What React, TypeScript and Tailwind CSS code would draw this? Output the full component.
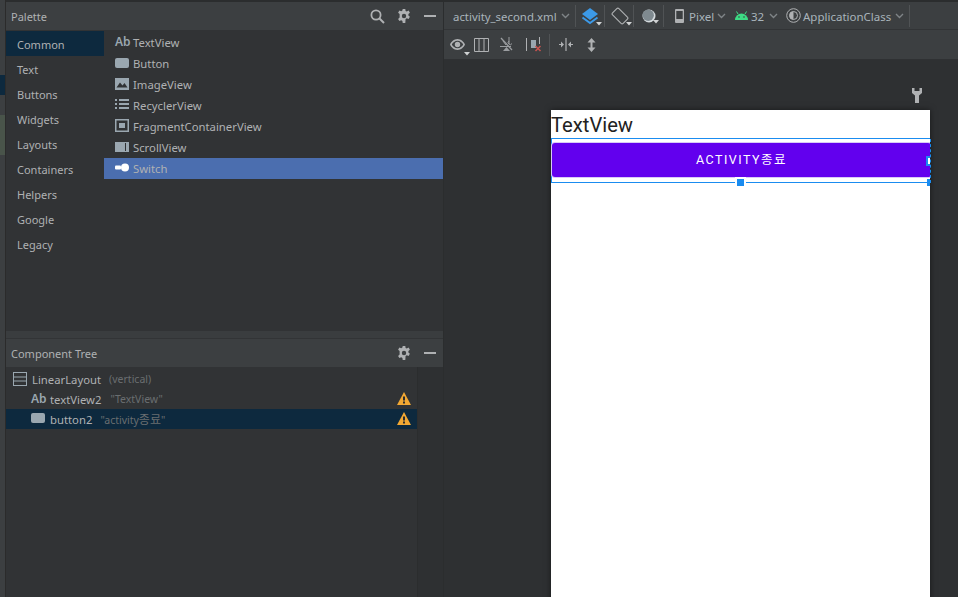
const f = { fontFamily: '"Noto Sans","Noto Sans CJK KR",sans-serif' };

function Caret() {
  return <svg width="9" height="6" viewBox="0 0 9 6" className="ml-[4px]"><path d="M1 1l3.5 3.5L8 1" fill="none" stroke="#7f8487" strokeWidth="1.4" /></svg>;
}
function Corner() {
  return <svg width="6" height="4" viewBox="0 0 6 4" className="absolute right-[-3px] bottom-[-1px]"><path d="M0 0h6L3 3.5z" fill="#d0d2d3" /></svg>;
}
function Gear() {
  return (
    <svg width="14" height="14" viewBox="0 0 14 14">
      <path fillRule="evenodd" fill="#afb1b3" d="M5.7 0h2.6l.3 2 1.2.6L11.600 1.500l1.300 2.200-1.500 1.300v1.400l1.500 1.300-1.300 2.200-1.800-.7-1.200.7L8.300 14H5.700l-.3-2-1.200-.7-1.800.7L1.100 9.900l1.500-1.300V5L1.100 3.700l1.300-2.200 1.800.7 1.200-.6zM7 4.800a2.200 2.200 0 100 4.400 2.200 2.200 0 000-4.400z" />
    </svg>
  );
}
function Minus() {
  return <div className="w-[12px] h-[2px] bg-[#afb1b3]" />;
}
function Warn() {
  return (
    <svg width="14" height="13" viewBox="0 0 14 13">
      <path d="M7 0l7 13H0z" fill="#f2a833" />
      <rect x="6" y="4.500" width="2" height="4" fill="#2b2d2e" />
      <rect x="6" y="9.500" width="2" height="2" fill="#2b2d2e" />
    </svg>
  );
}
function BtnIcon() {
  return <div className="w-[14px] h-[10px] rounded-[2px] bg-[#9aa7b0]" />;
}
function AbIcon() {
  return <span className="text-[12px] leading-none font-semibold text-[#9aa7b0]" style={f}>Ab</span>;
}

const categories = ['Common', 'Text', 'Buttons', 'Widgets', 'Layouts', 'Containers', 'Helpers', 'Google', 'Legacy'];

const widgets: [string, React.ReactNode][] = [
  ['TextView', <AbIcon />],
  ['Button', <BtnIcon />],
  ['ImageView', (
    <svg width="14" height="12" viewBox="0 0 14 12"><path fillRule="evenodd" fill="#9aa7b0" d="M0 0h14v12H0zM1.500 9.500h11L9.500 5 7.500 7.500 5 4.500z" /></svg>
  )],
  ['RecyclerView', (
    <svg width="14" height="11" viewBox="0 0 14 11" fill="#9aa7b0"><rect x="0" y="0" width="2" height="2" /><rect x="4" y="0" width="10" height="2" /><rect x="0" y="4" width="2" height="2" /><rect x="4" y="4" width="10" height="2" /><rect x="0" y="8" width="2" height="2" /><rect x="4" y="8" width="10" height="2" /></svg>
  )],
  ['FragmentContainerView', (
    <svg width="14" height="13" viewBox="0 0 14 13"><path fillRule="evenodd" fill="#9aa7b0" d="M0 0h14v13H0zM1.500 1.500v10h11v-10z" /><rect x="4" y="4" width="6" height="5" fill="#9aa7b0" /></svg>
  )],
  ['ScrollView', (
    <svg width="14" height="10" viewBox="0 0 14 10"><rect width="14" height="10" fill="#9aa7b0" /><rect x="10" y="1" width="1" height="8" fill="#313335" /></svg>
  )],
  ['Switch', (
    <svg width="14" height="9" viewBox="0 0 14 9"><rect x="0" y="2.500" width="6" height="4" rx="1" fill="#fff" /><circle cx="10" cy="4.500" r="4" fill="#fff" /></svg>
  )],
];

function Sep() {
  return <div className="w-px h-[22px] bg-[#505355]" />;
}

export default function App() {
  return (
    <div className="w-[958px] h-[597px] overflow-hidden flex bg-[#2e3032] text-[#afb1b3]" style={f}>
      {/* left IDE strip */}
      <div className="w-[6px] h-full flex flex-col bg-[#3c3f41] border-r border-[#2b2b2b]">
        <div className="h-[75px]" />
        <div className="h-[20px] bg-[#0d293e]" />
        <div className="h-[20px]" />
        <div className="h-[40px] bg-[#49544a]" />
      </div>

      {/* left panels */}
      <div className="w-[437px] h-full flex flex-col">
        <div className="h-[2px] bg-[#2b2d2e]" />
        <div className="h-[28px] flex items-center bg-[#3c3f41] pl-[5px] pr-[7px]">
          <span className="text-[11px] text-[#afb1b3] flex-1 pt-[2px]">Palette</span>
          <svg width="15" height="15" viewBox="0 0 15 15" className="mr-[12px]"><circle cx="6" cy="6" r="4.600" fill="none" stroke="#afb1b3" strokeWidth="1.800" /><path d="M9.500 9.500l4.500 4.500" stroke="#afb1b3" strokeWidth="2" /></svg>
          <div className="mr-[13px] flex"><Gear /></div>
          <Minus />
        </div>
        <div className="h-[301px] flex bg-[#313335]">
          <div className="w-[98px] flex flex-col pt-px">
            {categories.map((c, i) => (
              <div key={c} className={`h-[25px] pl-[11px] pt-[4px] flex items-center text-[11px] ${i === 0 ? 'bg-[#0d293e]' : ''}`}>{c}</div>
            ))}
          </div>
          <div className="flex-1 flex flex-col pt-[2px]">
            {widgets.map(([name, icon]) => (
              <div key={name} className={`h-[21px] flex items-center text-[11.300px] ${name === 'Switch' ? 'bg-[#4b6eaf]' : ''}`}>
                <div className="w-[29px] pl-[11px] flex items-center shrink-0 -translate-y-px">{icon}</div>
                <span className="pt-[2px]">{name}</span>
              </div>
            ))}
          </div>
        </div>
        <div className="h-[8px] bg-[#3a3d3f] border-b border-[#323436]" />
        <div className="h-[28px] flex items-center bg-[#3c3f41] pl-[5px] pr-[7px]">
          <span className="text-[11px] flex-1 pt-[2px]">Component Tree</span>
          <div className="mr-[13px] flex"><Gear /></div>
          <Minus />
        </div>
        <div className="flex-1 flex bg-[#313335]">
          <div className="w-[412px] flex flex-col border-r border-[#2b2d2e] pt-[2px]">
            <div className="h-[20px] flex items-center pl-[7px]">
              <svg width="14" height="14" viewBox="0 0 14 14" className="mr-[5px]"><path fillRule="evenodd" fill="#9aa7b0" d="M0 0h14v14H0zM1 1v3.500h12V1zM1 5.500V8.500h12V5.500zM1 9.500V13h12V9.500z" /></svg>
              <span className="text-[11.300px] pt-[2px]">LinearLayout</span>
              <span className="text-[10.500px] text-[#6a6e70] ml-[8px] pt-[2px]">(vertical)</span>
            </div>
            <div className="h-[20px] flex items-center pl-[25px]">
              <div className="w-[19px] flex"><AbIcon /></div>
              <span className="text-[11.300px] pt-[2px]">textView2</span>
              <span className="text-[10.500px] text-[#6a6e70] ml-[9px] pt-[2px]">"TextView"</span>
              <div className="ml-auto mr-[6px] flex -translate-y-px"><Warn /></div>
            </div>
            <div className="h-[20px] flex items-center pl-[25px] bg-[#0d293e]">
              <div className="w-[19px] -translate-y-px flex"><BtnIcon /></div>
              <span className="text-[11.300px] pt-[2px]">button2</span>
              <span className="text-[10.500px] text-[#6a6e70] ml-[8px] pt-[2px]">"activity<span className="text-[12px]">종료</span>"</span>
              <div className="ml-auto mr-[6px] flex -translate-y-px"><Warn /></div>
            </div>
          </div>
          <div className="flex-1 bg-[#2e3032]" />
        </div>
      </div>

      <div className="w-px h-full bg-[#2b2d2e]" />

      {/* right editor */}
      <div className="flex-1 h-full flex flex-col min-w-0">
        <div className="h-[2px] bg-[#2b2d2e]" />
        <div className="h-[28px] flex items-center bg-[#3c3f41] pl-[9px] border-b border-[#323436]">
          <span className="w-[104px] shrink-0 whitespace-nowrap text-[11.400px] text-[#a9b4bb] pt-[3px]">activity_second.xml</span>
          <Caret />
          <div className="ml-[5px]"><Sep /></div>
          <div className="relative ml-[5px] flex">
            <svg width="18" height="18" viewBox="0 0 18 18"><path d="M9 1l8 6-8 6-8-6z" fill="#3c9ae8" /><path d="M1.500 10.500L9 16l7.500-5.500" fill="none" stroke="#3c9ae8" strokeWidth="2" /></svg>
            <Corner />
          </div>
          <div className="ml-[5px]"><Sep /></div>
          <div className="relative ml-[6px] flex">
            <svg width="18" height="18" viewBox="0 0 18 18"><rect x="4.500" y="1.500" width="9" height="15" rx="1.500" transform="rotate(-45 9 9)" fill="none" stroke="#afb1b3" strokeWidth="1.100" /></svg>
            <Corner />
          </div>
          <div className="ml-[4px]"><Sep /></div>
          <div className="relative ml-[8px] flex">
            <svg width="14" height="14" viewBox="0 0 14 14"><circle cx="7" cy="7" r="6.500" fill="#d4dadd" /><circle cx="6.200" cy="6.200" r="5.700" fill="#7f8a90" /></svg>
            <Corner />
          </div>
          <div className="ml-[7px]"><Sep /></div>
          <svg width="9" height="14" viewBox="0 0 9 14" className="ml-[11px]"><path fillRule="evenodd" fill="#afb1b3" d="M1 0h7a1 1 0 011 1v12a1 1 0 01-1 1H1a1 1 0 01-1-1V1a1 1 0 011-1zM1.300 2v8h6.400V2z" /></svg>
          <span className="w-[24px] text-[11.500px] text-[#a9b4bb] ml-[5px] pt-[3px]">Pixel</span>
          <Caret />
          <svg width="13" height="9" viewBox="0 0 13 9" className="ml-[9px]"><path d="M0 9a6.500 6.500 0 0113 0z" fill="#3ddc84" /><path d="M3 3L1.500 .5M10 3l1.500-2.500" stroke="#3ddc84" strokeWidth="1" /><circle cx="4" cy="6" r=".8" fill="#3c3f41" /><circle cx="9" cy="6" r=".8" fill="#3c3f41" /></svg>
          <span className="w-[14px] text-[11.500px] text-[#a9b4bb] ml-[3px] pt-[3px]">32</span>
          <Caret />
          <svg width="15" height="15" viewBox="0 0 15 15" className="ml-[8px]"><circle cx="7.500" cy="7.500" r="6.800" fill="none" stroke="#afb1b3" strokeWidth="1" /><circle cx="7.500" cy="7.500" r="4" fill="none" stroke="#afb1b3" strokeWidth="1" /><path d="M7.500 3.500a4 4 0 000 8z" fill="#afb1b3" /></svg>
          <span className="w-[88px] whitespace-nowrap text-[11.500px] text-[#a9b4bb] ml-[2px] pt-[3px]">ApplicationClass</span>
          <Caret />
          <div className="ml-[5px]"><Sep /></div>
        </div>
        <div className="h-[30px] flex items-center bg-[#3c3f41] pl-[6px] border-b border-[#2f3133]">
          <div className="relative flex">
            <svg width="15" height="11" viewBox="0 0 15 11"><path fillRule="evenodd" fill="#afb1b3" d="M7.500 0C11 0 14 3 15 5.500 14 8 11 11 7.500 11S1 8 0 5.500C1 3 4 0 7.500 0zm0 1.800c-2.500 0-4.700 1.800-5.700 3.700 1 1.900 3.200 3.700 5.700 3.700s4.700-1.800 5.700-3.700c-1-1.900-3.200-3.700-5.700-3.700zm0 1a2.700 2.700 0 110 5.400 2.700 2.700 0 010-5.400z" /></svg>
            <div className="absolute right-[-2px] bottom-[-5px]"><Corner /></div>
          </div>
          <svg width="15" height="14" viewBox="0 0 15 14" className="ml-[9px]"><path d="M.5.500h14v13H.5zM5 .5v13M10 .5v13" fill="none" stroke="#afb1b3" /></svg>
          <svg width="16" height="15" viewBox="0 0 16 15" className="ml-[10px]"><path d="M2 1l11 12" stroke="#9a9da0" strokeWidth="1.300" /><path d="M10 0v7M10 4a2 2 0 103 2.500M4 4l3 4M1 9.500h11" fill="none" stroke="#9a9da0" strokeWidth="1" /><path d="M7.500 10l-3.500 4h7z" fill="#9a9da0" /></svg>
          <svg width="16" height="15" viewBox="0 0 16 15" className="ml-[11px]"><path d="M.5 1v13" stroke="#afb1b3" /><rect x="5" y="3" width="5" height="8" fill="#9aa7b0" /><path d="M13.500 0v7" stroke="#afb1b3" /><path d="M9.500 9l5 5M14.500 9l-5 5" stroke="#c75450" strokeWidth="1.500" /></svg>
          <div className="ml-[7px]"><Sep /></div>
          <svg width="14" height="13" viewBox="0 0 14 13" className="ml-[9px]"><path d="M7 0v13" stroke="#afb1b3" strokeWidth="1.200" /><path d="M0 6.500h3M11 6.500h3" stroke="#afb1b3" strokeWidth="1.200" /><path d="M2 3.500v6l3-3zM12 3.500v6l-3-3z" fill="#afb1b3" /></svg>
          <svg width="9" height="14" viewBox="0 0 9 14" className="ml-[14px]"><path d="M4.500 2v10" stroke="#afb1b3" strokeWidth="2" /><path d="M4.500 0L8.500 4.500H.5zM4.500 14L.5 9.500h8z" fill="#afb1b3" /></svg>
        </div>
        <div className="flex-1 relative bg-[#2e3032] overflow-hidden">
          <div className="absolute left-[468px] top-[28px]">
            <svg width="10" height="15" viewBox="0 0 10 15"><path d="M0 0h2.500v3h5V0H10v5L7 7.500V15H3V7.500L0 5z" fill="#afb1b3" /></svg>
          </div>
          {/* device canvas */}
          <div className="absolute left-[107px] top-[50px] w-[379px] h-[500px] bg-white shadow-[0_0_6px_rgba(0,0,0,0.5)] overflow-hidden">
            <div className="h-[28px] text-[20.200px] leading-[30px] text-[#222] whitespace-nowrap" style={{ fontFamily: 'Roboto,sans-serif' }}>TextView</div>
            <div className="relative h-[45px] w-[381px] border border-[#1a8cf0] flex items-center">
              <div className="w-full h-[34px] mt-[-2px] pt-[2px] rounded-[3px] bg-[#6200ee] shadow-[0_0_0_1px_#d9c9f7] flex items-center justify-center text-white text-[12.500px] tracking-[1.500px]" style={{ fontFamily: 'Roboto,"Noto Sans CJK KR",sans-serif' }}>
                ACTIVITY종료
              </div>
              <div className="absolute right-[-4px] top-[17px] w-[9px] h-[10px] bg-white border-2 border-[#1a8cf0]" />
              <div className="absolute left-[185px] bottom-[-4px] w-[7px] h-[7px] bg-[#1a8cf0] outline-2 outline-white" />
              <div className="absolute right-[-2px] bottom-[-4px] w-[6px] h-[7px] bg-[#1a8cf0]" />
            </div>
          </div>
          <div className="absolute left-[486px] top-[79px] h-[44px] border-l border-dashed border-[#1a8cf0]" />
        </div>
      </div>
    </div>
  );
}
